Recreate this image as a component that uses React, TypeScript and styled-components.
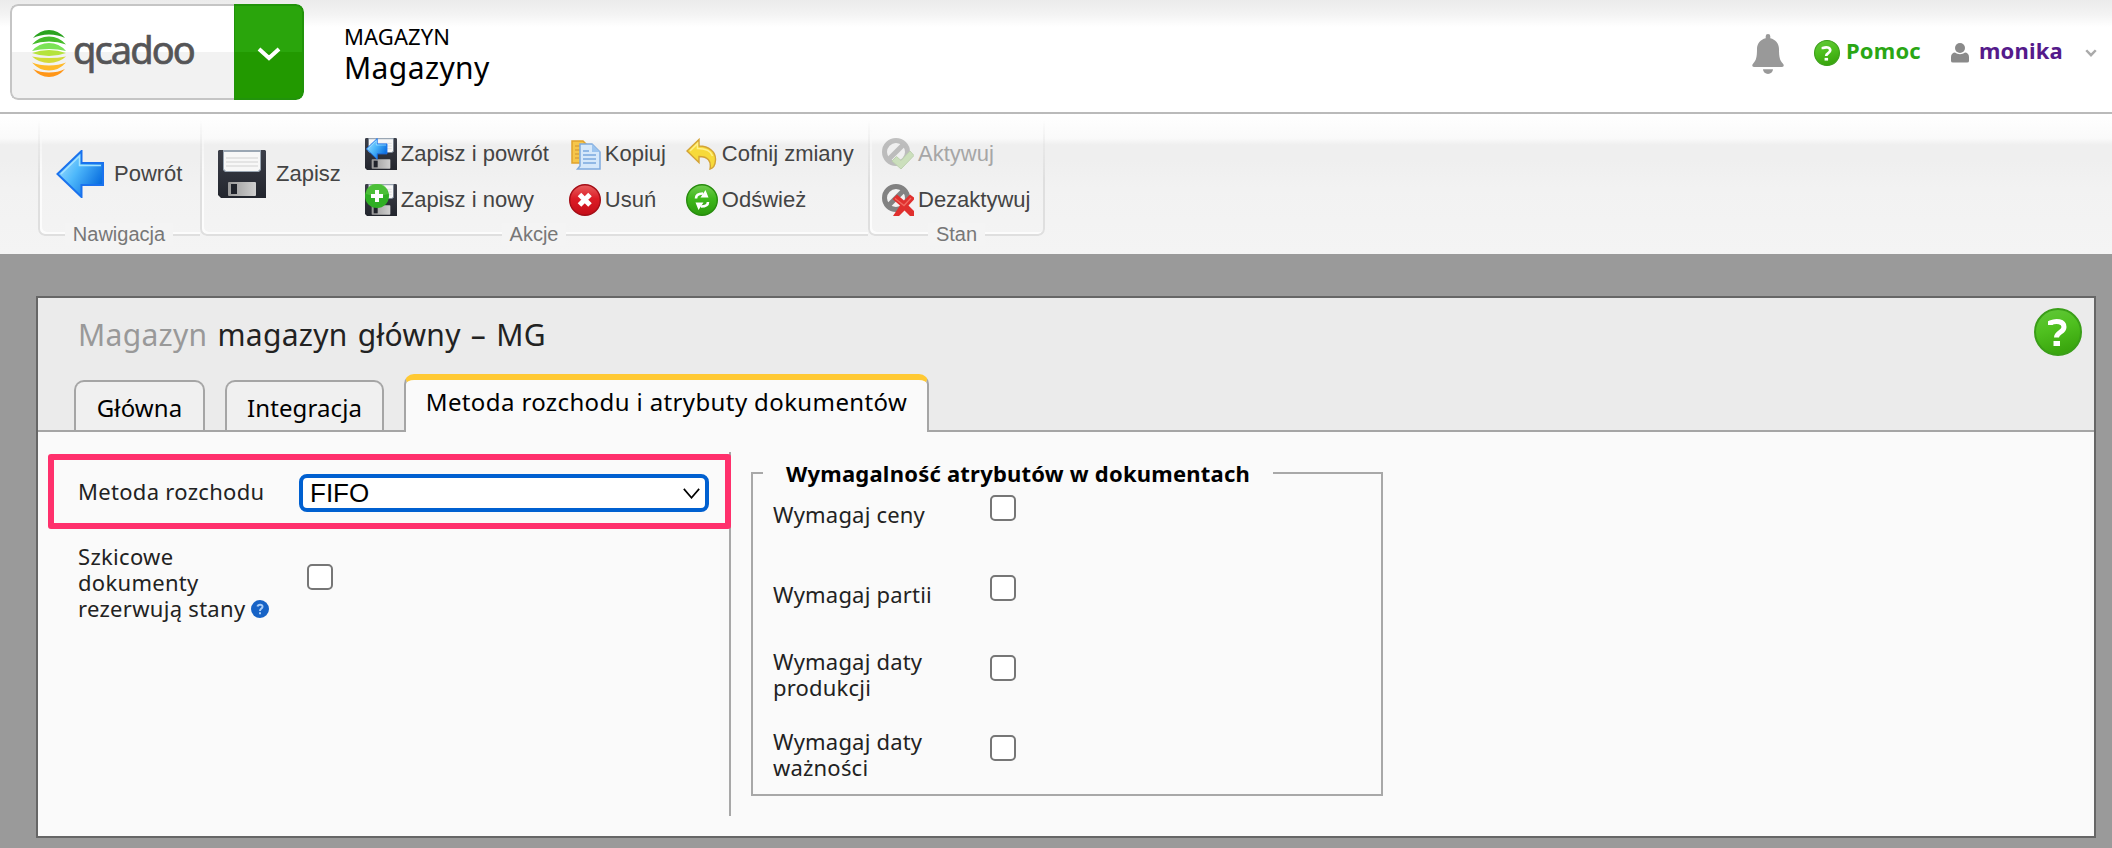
import React from 'react';
import styled, { createGlobalStyle } from 'styled-components';

const humanist = `"Lucida Grande", "Noto Sans", "Open Sans", sans-serif`;
const grotesque = `"Liberation Sans", Arial, sans-serif`;

const GlobalStyle = createGlobalStyle`
  *, *::before, *::after { box-sizing: border-box; }
  html, body { margin: 0; padding: 0; }
  body { font-family: ${humanist}; color: #222; background: #999; overflow: hidden; }
  svg { display: block; flex: none; }
`;

const Page = styled.div`
  display: flex;
  flex-direction: column;
  width: 2112px;
  height: 848px;
  background: #9a9a9a;
`;

/* ---------- header ---------- */

const Header = styled.header`
  display: flex;
  height: 114px;
  flex: none;
  padding: 4px 15px 0 10px;
  border-bottom: 2px solid #bababa;
  background: linear-gradient(#ebebeb 0, #f3f3f3 14px, #ffffff 27px);
`;

const LogoButton = styled.div`
  display: flex;
  width: 294px;
  height: 96px;
  border-radius: 8px;
  overflow: hidden;
`;

const LogoFace = styled.div`
  display: flex;
  width: 224px;
  padding: 23px 0 0 20px;
  border: 2px solid #c5c5c5;
  border-right: 0;
  border-radius: 8px 0 0 8px;
  background: linear-gradient(#fff 0 46px, #f2f2f2 46px);
`;

const LogoName = styled.span`
  margin: -1px 0 0 7px;
  font-size: 38px;
  line-height: 42px;
  letter-spacing: -1.9px;
  color: #555557;
  -webkit-text-stroke: 0.7px #555557;
`;

const LogoToggle = styled.button`
  display: flex;
  align-items: center;
  justify-content: center;
  width: 70px;
  padding: 4px 0 0;
  border: 2px solid #21930a;
  border-left-width: 1px;
  border-radius: 0 8px 8px 0;
  background: linear-gradient(#2aa50c 0 46px, #229900 46px);
`;

const Heading = styled.div`
  display: flex;
  flex-direction: column;
  margin: 18px 0 0 40px;
  color: #000;
`;

const HeadingSection = styled.span`
  font-size: 22px;
  line-height: 28px;
  letter-spacing: 0.1px;
`;

const HeadingPage = styled.span`
  font-size: 30px;
  line-height: 36px;
  letter-spacing: 0.4px;
`;

const UserBar = styled.div`
  display: flex;
  align-items: center;
  height: 98px;
  margin-left: auto;
`;

const UserLink = styled.a<{ $color: string; $gap: number }>`
  display: flex;
  align-items: center;
  gap: ${(p) => p.$gap}px;
  margin-left: 30px;
  font-size: 22px;
  line-height: 26px;
  font-weight: 700;
  color: ${(p) => p.$color};
`;

const UserLinkText = styled.span<{ $after?: number }>`
  margin: -6px ${(p) => p.$after ?? 0}px 0 0;
  letter-spacing: 0.2px;
`;

/* ---------- ribbon ---------- */

const Ribbon = styled.nav`
  display: flex;
  height: 140px;
  flex: none;
  padding: 6px 0 0 38px;
  background: linear-gradient(#fff 0, #fafafa 24px, #efefef 31px, #efefef 46px, #f2f2f2 74px, #f4f4f4 140px);
  font-family: ${grotesque};
`;

const RibbonGroup = styled.section<{ $width: number; $last?: boolean }>`
  position: relative;
  display: flex;
  flex-direction: column;
  align-items: center;
  width: ${(p) => p.$width}px;
  height: 125px;

  &::before {
    content: '';
    position: absolute;
    inset: 0 0 9px 0;
    border: 2px solid #dfdfdf;
    border-top: 0;
    border-right-width: ${(p) => (p.$last ? 2 : 0)}px;
    border-radius: 0 0 ${(p) => (p.$last ? 7 : 0)}px 7px;
    box-shadow: inset 2px -2px 0 #fcfcfc;
    mask-image: linear-gradient(transparent, #000 50%);
  }
`;

const RibbonBody = styled.div<{ $left: number }>`
  position: relative;
  display: flex;
  width: 100%;
  height: 103px;
  padding: 18px 0 0 ${(p) => p.$left}px;
`;

const RibbonLabel = styled.span`
  position: relative;
  padding: 0 8px;
  font-size: 20px;
  line-height: 22px;
  color: #777;
  background: #f4f4f4;
`;

const BigAction = styled.div`
  display: flex;
  align-items: center;
  gap: 10px;
  height: 48px;
  margin-top: 12px;
  font-size: 22px;
  line-height: 26px;
  color: #444;
`;

const ActionGrid = styled.div<{ $columns: string; $before?: number }>`
  display: grid;
  grid-template-columns: ${(p) => p.$columns};
  grid-auto-flow: column;
  grid-template-rows: 32px 32px;
  row-gap: 14px;
  margin-left: ${(p) => p.$before ?? 0}px;
`;

const Action = styled.div<{ $disabled?: boolean }>`
  display: flex;
  gap: 4px;
  font-size: 22px;
  line-height: 31px;
  white-space: nowrap;
  color: ${(p) => (p.$disabled ? '#a6a6a6' : '#444')};

  svg { opacity: ${(p) => (p.$disabled ? 0.5 : 1)}; }
`;

/* ---------- window ---------- */

const Window = styled.main`
  display: flex;
  flex-direction: column;
  flex: none;
  width: 2060px;
  height: 542px;
  margin: 42px 0 0 36px;
  border: 2px solid #666;
  background: #fafafa;
`;

const WindowHead = styled.div`
  display: flex;
  flex-direction: column;
  flex: none;
  height: 134px;
  border-bottom: 2px solid #a5a5a5;
  background: #ebebeb;
`;

const TitleRow = styled.div`
  display: flex;
  flex: none;
  align-items: flex-start;
  justify-content: space-between;
  height: 76px;
  padding: 10px 12px 0 40px;
`;

const Title = styled.h1`
  margin: 9px 0 0;
  font-size: 30px;
  line-height: 36px;
  font-weight: 400;
  letter-spacing: 0.3px;
  word-spacing: 2px;
  color: #222;
`;

const TitleKind = styled.span`
  color: #999;
`;

const Tabs = styled.div`
  display: flex;
  flex: none;
  align-items: flex-start;
  gap: 20px;
  height: 58px;
  padding-left: 36px;
`;

const Tab = styled.div<{ $active?: boolean; $width: number }>`
  width: ${(p) => p.$width}px;
  height: ${(p) => (p.$active ? 58 : 50)}px;
  margin-top: ${(p) => (p.$active ? 0 : 6)}px;
  padding-top: ${(p) => (p.$active ? 6 : 10)}px;
  border: 2px solid #a5a5a5;
  border-top: ${(p) => (p.$active ? '6px solid #ffc933' : '2px solid #a5a5a5')};
  border-bottom: 0;
  border-radius: 10px 10px 0 0;
  background: ${(p) => (p.$active ? '#fafafa' : '#f0f0f0')};
  font-size: 24px;
  line-height: 32px;
  letter-spacing: ${(p) => (p.$active ? 0.38 : 0.1)}px;
  text-align: center;
  white-space: nowrap;
  color: #000;
`;

const Content = styled.div`
  display: flex;
  padding-top: 20px;
`;

const FormColumn = styled.div`
  position: relative;
  width: 693px;
  height: 364px;
  padding-left: 40px;
  border-right: 2px solid #a8a8a8;
`;

const FieldRow = styled.label<{ $height: number }>`
  display: flex;
  height: ${(p) => p.$height}px;
`;

const FieldLabel = styled.span<{ $top: number }>`
  width: 221px;
  padding: ${(p) => p.$top}px 20px 0 0;
  font-size: 22px;
  line-height: 26px;
  letter-spacing: 0.3px;
  color: #222;
`;

const HintIcon = styled.span`
  display: inline-block;
  margin-left: 6px;
  vertical-align: -1px;
`;

const Select = styled.div`
  display: flex;
  align-items: center;
  justify-content: space-between;
  width: 410px;
  height: 38px;
  margin-top: 22px;
  padding: 0 5px 0 7px;
  border: 4px solid #0060d0;
  border-radius: 8px;
  background: #fff;
  font-family: ${grotesque};
  font-size: 26px;
  line-height: 30px;
  color: #000;
`;

const Checkbox = styled.input.attrs({ type: 'checkbox' })<{ $top: number; $left?: number }>`
  appearance: none;
  width: 26px;
  height: 26px;
  margin: ${(p) => p.$top}px 0 0 ${(p) => p.$left ?? 0}px;
  border: 2px solid #767676;
  border-radius: 5px;
  background: #fff;
`;

const Highlight = styled.div`
  position: absolute;
  top: 2px;
  left: 10px;
  width: 683px;
  height: 75px;
  border: 6px solid #ff306c;
  border-radius: 3px;
  pointer-events: none;
`;

const Fieldset = styled.fieldset`
  width: 632px;
  height: 335px;
  margin: 9px 0 0 20px;
  padding: 0;
  border: 2px solid #a8a8a8;
`;

const Legend = styled.legend`
  margin-left: 10px;
  padding: 0 23px 0 23px;
  font-size: 22px;
  line-height: 24px;
  font-weight: 700;
  letter-spacing: 0.22px;
  color: #000;
`;

const FieldsetRows = styled.div`
  margin-top: -11px;
`;

const AttributeRow = styled.label`
  display: flex;
  height: 80px;
  padding-left: 20px;
`;

const AttributeLabel = styled.span`
  align-self: center;
  width: 160px;
  font-size: 22px;
  line-height: 26px;
  letter-spacing: 0.2px;
  color: #222;
`;

/* ---------- icons ---------- */

const LogoMark = () => (
  <svg width="34" height="48" viewBox="0 0 34 48">
    <path d="M1 9Q8 1 17 1T33 9Q26 5.500 17 5.500T1 9Z" fill="#2aa31f" />
    <path d="M0 15.500Q7 7.500 17 7.500T34 15.500Q26 12.500 17 12.500T0 15.500Z" fill="#45bb2a" />
    <path d="M0 22Q7 14 17 14T34 22Q26 20 17 20T0 22Z" fill="#7be356" />
    <path d="M0 24Q8 21 17 21T34 24Q26 27 17 27T0 24Z" fill="#b5e33c" />
    <path d="M0 27.500Q8 29 17 29T34 27.500Q27 34 17 34T0 27.500Z" fill="#d3da38" />
    <path d="M0 33.500Q7 36.500 17 36.500T34 33.500Q27 41.500 17 41.500T0 33.500Z" fill="#ffb92a" />
    <path d="M1 40Q8 43.500 17 43.500T33 40Q26 48 17 48T1 40Z" fill="#ff9618" />
  </svg>
);

const Chevron = ({ w, h, stroke, color }: { w: number; h: number; stroke: number; color: string }) => (
  <svg width={w} height={h} viewBox={`0 0 ${w} ${h}`}>
    <path
      d={`M${stroke / 2} ${stroke / 2}L${w / 2} ${h - stroke * 0.75}L${w - stroke / 2} ${stroke / 2}`}
      fill="none"
      stroke={color}
      strokeWidth={stroke}
    />
  </svg>
);

const BellBox = styled.span`
  padding-top: 2px;
`;

const BellIcon = () => (
  <svg width="32" height="40" viewBox="0 0 32 40">
    <path
      d="M16 0a2.300 2.300 0 0 1 2.300 2.300V4.300C23.500 5.400 27 9.600 27 15c0 8 .8 11.500 3.800 14.400C32.400 31 31.800 33 30 33H2C.2 33-.4 31 1.200 29.400 4.200 26.500 5 23 5 15c0-5.400 3.500-9.600 8.700-10.700v-2A2.300 2.300 0 0 1 16 0Z"
      fill="#999"
    />
    <path d="M11 35.200h10a5 4.800 0 0 1-10 0Z" fill="#999" />
  </svg>
);

const HelpIcon = ({ size }: { size: number }) => (
  <svg width={size} height={size} viewBox="0 0 48 48">
    <defs>
      <linearGradient id={`help${size}`} x1="0" y1="0" x2="0.300" y2="1">
        <stop offset="0" stopColor="#63c83c" />
        <stop offset="0.500" stopColor="#4fc01f" />
        <stop offset="1" stopColor="#3aa60e" />
      </linearGradient>
    </defs>
    <circle cx="24" cy="24" r="23" fill={`url(#help${size})`} stroke="#3a9e18" strokeWidth="2" />
    <path d="M16.500 17V14.800C22 12.500 30 13 30 19c0 5.500-7.500 5-7.500 10.500" fill="none" stroke="#fff" strokeWidth="5" />
    <path d="M19.500 33h6.500v5h-6.500z" fill="#fff" />
  </svg>
);

const HintGlyph = () => (
  <svg width="18" height="18" viewBox="0 0 18 18">
    <circle cx="9" cy="9" r="9" fill="#1763c6" />
    <path d="M6.500 6.500C7 4 11.800 4 11.500 6.800 11.300 8.600 9 8.500 9 11" fill="none" stroke="#a9cdf7" strokeWidth="2" />
    <path d="M8 12.300h2v2H8z" fill="#a9cdf7" />
  </svg>
);

const PersonIcon = () => (
  <svg width="18" height="20" viewBox="0 0 18 20">
    <circle cx="9" cy="5" r="5" fill="#8a8a8a" />
    <path d="M0 18v-4c0-3 2-4.500 4-4.500 3 2.200 7 2.200 10 0 2 0 4 1.500 4 4.500v4q0 1.500-2 1.500H2q-2 0-2-1.500Z" fill="#8a8a8a" />
  </svg>
);

const ArrowShape = ({ id }: { id: string }) => (
  <>
    <defs>
      <linearGradient id={id} x1="0" y1="0" x2="1" y2="0.600">
        <stop offset="0" stopColor="#b5e6ff" />
        <stop offset="0.500" stopColor="#4fb9fb" />
        <stop offset="1" stopColor="#0a6fe0" />
      </linearGradient>
    </defs>
    <path d="M1.500 24L25.500 1V13H47V35H25.500V47Z" fill={`url(#${id})`} stroke="#1a72ee" strokeWidth="2" />
    <path d="M5 24L23.500 6V15.500H45" fill="none" stroke="#a4e3ff" strokeWidth="1.500" />
  </>
);

const BackIcon = () => (
  <svg width="48" height="48" viewBox="0 0 48 48">
    <ArrowShape id="back" />
  </svg>
);

const DiskShape = () => (
  <>
    <defs>
      <linearGradient id="diskBody" x1="0" y1="0" x2="0" y2="1">
        <stop offset="0" stopColor="#3c3f49" />
        <stop offset="1" stopColor="#22252d" />
      </linearGradient>
      <linearGradient id="diskShutter" x1="0" y1="0" x2="1" y2="0">
        <stop offset="0" stopColor="#999" />
        <stop offset="1" stopColor="#cfcfcf" />
      </linearGradient>
    </defs>
    <path d="M1 0H47L48 1V48H3L0 45V1Z" fill="url(#diskBody)" />
    <path d="M5 0H43V20L41 22H7L5 20Z" fill="#9aa6b3" />
    <path d="M6 2H42V19L40 21H8L6 19Z" fill="#f7f7f7" />
    <path d="M8 8H40M8 12H40M8 16H40" stroke="#dedede" strokeWidth="1.500" />
    <rect x="10" y="32" width="28" height="14" rx="1" fill="url(#diskShutter)" />
    <rect x="13" y="34" width="6" height="10" fill="#20232b" />
  </>
);

const DiskIcon = () => (
  <svg width="48" height="48" viewBox="0 0 48 48">
    <DiskShape />
  </svg>
);

const SaveBackIcon = () => (
  <svg width="32" height="32" viewBox="0 0 48 48">
    <DiskShape />
    <g transform="translate(1 0) scale(.68)">
      <ArrowShape id="saveBack" />
    </g>
  </svg>
);

const SaveNewIcon = () => (
  <svg width="32" height="32" viewBox="0 0 32 32">
    <g transform="scale(.6667)">
      <DiskShape />
    </g>
    <circle cx="12" cy="12" r="12" fill="#2fae24" />
    <path d="M1 10a11 11 0 0 1 22 0Q12 14 1 10Z" fill="#5fca45" opacity=".6" />
    <path d="M12 6V18M6 12H18" stroke="#fff" strokeWidth="4" />
  </svg>
);

const CopyIcon = () => (
  <svg width="32" height="32" viewBox="0 0 32 32">
    <path d="M3 3H14L18 7V25H3Z" fill="#f6c64a" stroke="#e0a22c" strokeWidth="1.500" />
    <path d="M6 8H13M6 12H11M6 16H10M6 20H10" stroke="#dba23a" strokeWidth="1.300" />
    <path d="M11 6H23L31 14V31H8.500L11 28Z" fill="#d5e8fa" stroke="#7fabde" strokeWidth="1.500" />
    <path d="M23 6V14H31Z" fill="#9cc4ee" />
    <path d="M14 13H20M14 17H27M14 21H27M14 25H27" stroke="#7aa8de" strokeWidth="1.700" />
  </svg>
);

const DeleteIcon = () => (
  <svg width="32" height="32" viewBox="0 0 32 32">
    <defs>
      <linearGradient id="del" x1="0" y1="0" x2="0" y2="1">
        <stop offset="0" stopColor="#e86060" />
        <stop offset="0.450" stopColor="#dc1c26" />
        <stop offset="1" stopColor="#c40d18" />
      </linearGradient>
    </defs>
    <circle cx="16" cy="16" r="15.300" fill="url(#del)" stroke="#a30d16" strokeWidth="1.400" />
    <path d="M10.500 10.500L21 21M21 10.500L10.500 21" stroke="#fff" strokeWidth="5" />
  </svg>
);

const UndoIcon = () => (
  <svg width="32" height="32" viewBox="0 0 32 32">
    <path
      d="M1 13L13 1.500V8C23 8 30 14 29.500 22 29.300 26 28 30 24 31 25.500 23 22 18.500 13 18.500V24.500Z"
      fill="#f7da3a"
      stroke="#d3a336"
      strokeWidth="1.400"
    />
    <path d="M4 13L11.500 5.500V10.500C19 10.500 25 13 26.500 18" fill="none" stroke="#fff08a" strokeWidth="1.500" />
  </svg>
);

const RefreshIcon = () => (
  <svg width="32" height="32" viewBox="0 0 32 32">
    <defs>
      <linearGradient id="refresh" x1="0" y1="0" x2="0" y2="1">
        <stop offset="0" stopColor="#72cc50" />
        <stop offset="0.450" stopColor="#3fb81c" />
        <stop offset="1" stopColor="#2b9a0c" />
      </linearGradient>
    </defs>
    <circle cx="16" cy="16" r="15.300" fill="url(#refresh)" stroke="#278b0e" strokeWidth="1.400" />
    <path d="M10 14.500C10 11 12.500 9.500 17 9.500M22 18C22 21 19.500 22.500 15 22.500" fill="none" stroke="#fff" strokeWidth="2.600" />
    <path d="M19.500 6L22.500 13.500H14.500Z M12.500 26L9.500 18.500H17.500Z" fill="#fff" />
  </svg>
);

const BanShape = ({ color }: { color: string }) => (
  <>
    <circle cx="14" cy="14" r="11.500" fill="none" stroke={color} strokeWidth="5" />
    <path d="M6 22L22 6" stroke={color} strokeWidth="5" />
  </>
);

const ActivateIcon = () => (
  <svg width="32" height="32" viewBox="0 0 32 32">
    <BanShape color="#8a8a8a" />
    <path d="M10 23L14.500 18.500L19 22.500L28 13L32 17.500L19 31Z" fill="#a9d08b" stroke="#8ab070" strokeWidth="1" />
  </svg>
);

const DeactivateIcon = () => (
  <svg width="32" height="32" viewBox="0 0 32 32">
    <BanShape color="#828282" />
    <path
      d="M10.500 15L15 10.500L22 16.500L28 10.500L32 13.500V15.500L26.500 21.500L32 27V32H28L22.500 26.500L17 32H11L18 21.500Z"
      fill="#e0302e"
    />
    <path d="M13 14.500L22 21.500L29 14" fill="none" stroke="#f06a60" strokeWidth="1.300" />
  </svg>
);

/* ---------- page ---------- */

const attributes = ['Wymagaj ceny', 'Wymagaj partii', 'Wymagaj daty produkcji', 'Wymagaj daty ważności'];

export default function App() {
  return (
    <Page>
      <GlobalStyle />
      <Header>
        <LogoButton>
          <LogoFace>
            <LogoMark />
            <LogoName>qcadoo</LogoName>
          </LogoFace>
          <LogoToggle aria-label="Menu">
            <Chevron w={24} h={14} stroke={4} color="#fff" />
          </LogoToggle>
        </LogoButton>
        <Heading>
          <HeadingSection>MAGAZYN</HeadingSection>
          <HeadingPage>Magazyny</HeadingPage>
        </Heading>
        <UserBar>
          <BellBox><BellIcon /></BellBox>
          <UserLink $color="#2aa614" $gap={6}>
            <HelpIcon size={26} />
            <UserLinkText>Pomoc</UserLinkText>
          </UserLink>
          <UserLink $color="#551a8b" $gap={10}>
            <PersonIcon />
            <UserLinkText $after={12}>monika</UserLinkText>
            <Chevron w={12} h={8} stroke={2.500} color="#aaa" />
          </UserLink>
        </UserBar>
      </Header>

      <Ribbon>
        <RibbonGroup $width={162}>
          <RibbonBody $left={18}>
            <BigAction><BackIcon />Powrót</BigAction>
          </RibbonBody>
          <RibbonLabel>Nawigacja</RibbonLabel>
        </RibbonGroup>
        <RibbonGroup $width={668}>
          <RibbonBody $left={18}>
            <BigAction><DiskIcon />Zapisz</BigAction>
            <ActionGrid $columns="204px 117px 160px" $before={24}>
              <Action><SaveBackIcon />Zapisz i powrót</Action>
              <Action><SaveNewIcon />Zapisz i nowy</Action>
              <Action><CopyIcon />Kopiuj</Action>
              <Action><DeleteIcon />Usuń</Action>
              <Action><UndoIcon />Cofnij zmiany</Action>
              <Action><RefreshIcon />Odśwież</Action>
            </ActionGrid>
          </RibbonBody>
          <RibbonLabel>Akcje</RibbonLabel>
        </RibbonGroup>
        <RibbonGroup $width={177} $last>
          <RibbonBody $left={14}>
            <ActionGrid $columns="160px">
              <Action $disabled><ActivateIcon />Aktywuj</Action>
              <Action><DeactivateIcon />Dezaktywuj</Action>
            </ActionGrid>
          </RibbonBody>
          <RibbonLabel>Stan</RibbonLabel>
        </RibbonGroup>
      </Ribbon>

      <Window>
        <WindowHead>
          <TitleRow>
            <Title><TitleKind>Magazyn</TitleKind> magazyn główny – MG</Title>
            <HelpIcon size={48} />
          </TitleRow>
          <Tabs>
            <Tab $width={131}>Główna</Tab>
            <Tab $width={159}>Integracja</Tab>
            <Tab $width={525} $active>Metoda rozchodu i atrybuty dokumentów</Tab>
          </Tabs>
        </WindowHead>
        <Content>
          <FormColumn>
            <FieldRow $height={80}>
              <FieldLabel $top={26}>Metoda rozchodu</FieldLabel>
              <Select>
                FIFO
                <Chevron w={17} h={11} stroke={1.700} color="#000" />
              </Select>
            </FieldRow>
            <FieldRow $height={100}>
              <FieldLabel $top={11}>
                Szkicowe<br />dokumenty<br />rezerwują stany<HintIcon><HintGlyph /></HintIcon>
              </FieldLabel>
              <Checkbox $top={32} $left={8} />
            </FieldRow>
            <Highlight />
          </FormColumn>
          <Fieldset>
            <Legend>Wymagalność atrybutów w dokumentach</Legend>
            <FieldsetRows>
              {attributes.map((name) => (
                <AttributeRow key={name}>
                  <AttributeLabel>{name}</AttributeLabel>
                  <Checkbox $top={21} $left={57} />
                </AttributeRow>
              ))}
            </FieldsetRows>
          </Fieldset>
        </Content>
      </Window>
    </Page>
  );
}
